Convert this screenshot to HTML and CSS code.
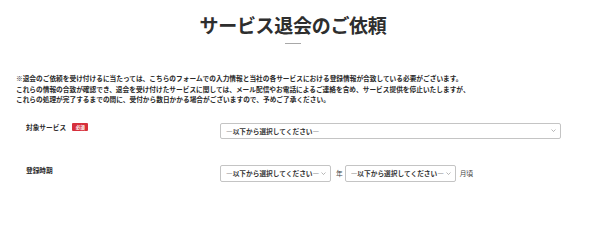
FILE: index.html
```html
<!DOCTYPE html>
<html lang="ja">
<head>
<meta charset="utf-8">
<title>サービス退会のご依頼</title>
<link rel="stylesheet" href="styles.css">
</head>
<body>
<div class="page">
  <h1 class="title">サービス退会のご依頼</h1>
  <div class="rule"></div>
  <p class="notice">※退会のご依頼を受け付けるに当たっては、こちらのフォームでの入力情報と当社の各サービスにおける登録情報が合致している必要がございます。<br>これらの情報の合致が確認でき、退会を受け付けたサービスに関しては、メール配信やお電話によるご連絡を含め、サービス提供を停止いたしますが、<br>これらの処理が完了するまでの間に、受付から数日かかる場合がございますので、予めご了承ください。</p>
  <div class="form">
    <div class="row row-service">
      <div class="label">対象サービス<span class="badge">必須</span></div>
      <div class="field">
        <select class="sel sel-full"><option>—以下から選択してください—</option></select>
      </div>
    </div>
    <div class="row row-period">
      <div class="label">登録時期</div>
      <div class="field">
        <select class="sel sel-half"><option>—以下から選択してください—</option></select>
        <span class="unit unit-year">年</span>
        <select class="sel sel-half"><option>—以下から選択してください—</option></select>
        <span class="unit unit-month">月頃</span>
      </div>
    </div>
  </div>
</div>
</body>
</html>
```

FILE: styles.css
```css
* { box-sizing: border-box; }
html, body { margin: 0; padding: 0; background: #fff; }
body {
  font-family: "Noto Sans CJK JP", "Noto Sans", sans-serif;
  color: #2b2b2b;
}
.page {
  padding: 11px 30px 0 16px;
}
.title {
  margin: 0;
  font-size: 19px;
  line-height: 27px;
  font-weight: 700;
  text-align: center;
  color: #2e2e2e;
  letter-spacing: -0.3px;
}
.rule {
  width: 16px;
  height: 1px;
  background: #a8a8a8;
  margin: 5px auto 0;
}
.notice {
  margin: 29px 0 0;
  font-size: 6.7px;
  line-height: 10.5px;
  font-weight: 700;
  color: #2a2a2a;
  white-space: nowrap;
}
.form {
  padding-left: 10px;
}
.row {
  display: flex;
  align-items: flex-start;
}
.row-service { margin-top: 17px; }
.row-period { margin-top: 26px; }
.label {
  width: 194px;
  flex: none;
  font-size: 6.7px;
  line-height: 10px;
  font-weight: 700;
  color: #2a2a2a;
  display: flex;
  align-items: center;
}
.badge {
  display: inline-block;
  margin-left: 6px;
  background: #d6303c;
  color: #fff;
  font-size: 4.6px;
  line-height: 8px;
  height: 8px;
  padding: 0 3.5px;
  border-radius: 1px;
  font-weight: 700;
}
.field {
  display: flex;
  align-items: center;
}
.sel {
  -webkit-appearance: none;
  appearance: none;
  font-family: "Noto Sans CJK JP", "Noto Sans", sans-serif;
  font-size: 6.7px;
  font-weight: 700;
  color: #333;
  background: #fff url("data:image/svg+xml;utf8,<svg xmlns='http://www.w3.org/2000/svg' width='5' height='3' viewBox='0 0 5 3'><path d='M0.5 0.5 L2.5 2.5 L4.5 0.5' fill='none' stroke='%23888' stroke-width='0.6'/></svg>") no-repeat right 4px center;
  border: 1px solid #c4c4c4;
  border-radius: 2px;
  padding: 0 10px 0 5px;
  margin: 0;
  outline: none;
}
.sel-full {
  width: 341px;
  height: 16px;
  margin-top: 1px;
}
.sel-half {
  width: 111px;
  height: 17px;
}
.unit {
  font-size: 6.7px;
  color: #444;
}
.unit-year { margin: 0 2px 0 5px; }
.unit-month { margin-left: 4px; }
```
